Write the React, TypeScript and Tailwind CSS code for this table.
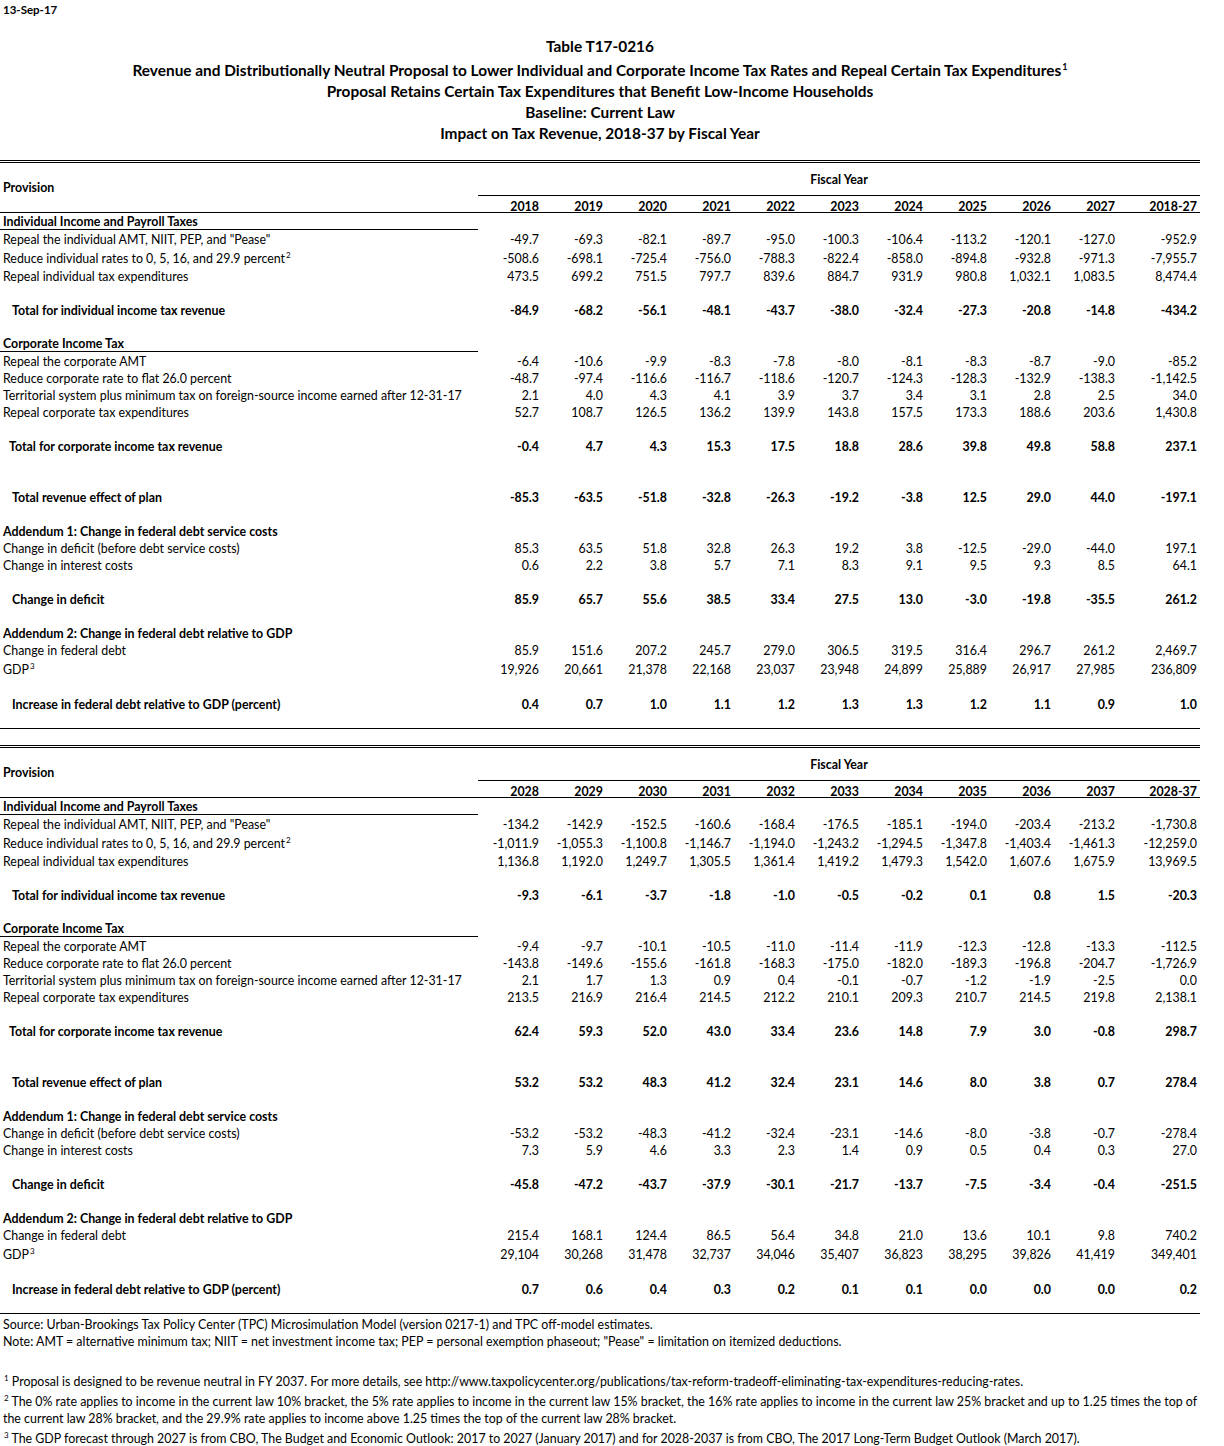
import React from 'react';

type Row =
  | { kind: 'blank'; rule?: boolean }
  | { kind: 'section'; label: string; underline?: boolean }
  | { kind: 'item'; label: string; sup?: string; values: string[] }
  | { kind: 'total'; label: string; indent: string; values: string[] };

const CORP_TERR = 'Territorial system plus minimum tax on foreign-source income earned after 12-31-17';

function buildRows(v: string[][]): Row[] {
  return [
    { kind: 'section', label: 'Individual Income and Payroll Taxes', underline: true },
    { kind: 'item', label: 'Repeal the individual AMT, NIIT, PEP, and "Pease"', values: v[0] },
    { kind: 'item', label: 'Reduce individual rates to 0, 5, 16, and 29.9 percent', sup: '2', values: v[1] },
    { kind: 'item', label: 'Repeal individual tax expenditures', values: v[2] },
    { kind: 'blank' },
    { kind: 'total', label: 'Total for individual income tax revenue', indent: 'pl-[12px]', values: v[3] },
    { kind: 'blank' },
    { kind: 'section', label: 'Corporate Income Tax', underline: true },
    { kind: 'item', label: 'Repeal the corporate AMT', values: v[4] },
    { kind: 'item', label: 'Reduce corporate rate to flat 26.0 percent', values: v[5] },
    { kind: 'item', label: CORP_TERR, values: v[6] },
    { kind: 'item', label: 'Repeal corporate tax expenditures', values: v[7] },
    { kind: 'blank' },
    { kind: 'total', label: 'Total for corporate income tax revenue', indent: 'pl-[9px]', values: v[8] },
    { kind: 'blank' },
    { kind: 'blank' },
    { kind: 'total', label: 'Total revenue effect of plan', indent: 'pl-[12px]', values: v[9] },
    { kind: 'blank' },
    { kind: 'section', label: 'Addendum 1: Change in federal debt service costs' },
    { kind: 'item', label: 'Change in deficit (before debt service costs)', values: v[10] },
    { kind: 'item', label: 'Change in interest costs', values: v[11] },
    { kind: 'blank' },
    { kind: 'total', label: 'Change in deficit', indent: 'pl-[12px]', values: v[12] },
    { kind: 'blank' },
    { kind: 'section', label: 'Addendum 2: Change in federal debt relative to GDP' },
    { kind: 'item', label: 'Change in federal debt', values: v[13] },
    { kind: 'item', label: 'GDP', sup: '3', values: v[14] },
    { kind: 'blank' },
    { kind: 'total', label: 'Increase in federal debt relative to GDP (percent)', indent: 'pl-[12px]', values: v[15] },
    { kind: 'blank', rule: true },
  ];
}

const first = {
  years: ['2018', '2019', '2020', '2021', '2022', '2023', '2024', '2025', '2026', '2027', '2018-27'],
  values: [
    ['-49.7', '-69.3', '-82.1', '-89.7', '-95.0', '-100.3', '-106.4', '-113.2', '-120.1', '-127.0', '-952.9'],
    ['-508.6', '-698.1', '-725.4', '-756.0', '-788.3', '-822.4', '-858.0', '-894.8', '-932.8', '-971.3', '-7,955.7'],
    ['473.5', '699.2', '751.5', '797.7', '839.6', '884.7', '931.9', '980.8', '1,032.1', '1,083.5', '8,474.4'],
    ['-84.9', '-68.2', '-56.1', '-48.1', '-43.7', '-38.0', '-32.4', '-27.3', '-20.8', '-14.8', '-434.2'],
    ['-6.4', '-10.6', '-9.9', '-8.3', '-7.8', '-8.0', '-8.1', '-8.3', '-8.7', '-9.0', '-85.2'],
    ['-48.7', '-97.4', '-116.6', '-116.7', '-118.6', '-120.7', '-124.3', '-128.3', '-132.9', '-138.3', '-1,142.5'],
    ['2.1', '4.0', '4.3', '4.1', '3.9', '3.7', '3.4', '3.1', '2.8', '2.5', '34.0'],
    ['52.7', '108.7', '126.5', '136.2', '139.9', '143.8', '157.5', '173.3', '188.6', '203.6', '1,430.8'],
    ['-0.4', '4.7', '4.3', '15.3', '17.5', '18.8', '28.6', '39.8', '49.8', '58.8', '237.1'],
    ['-85.3', '-63.5', '-51.8', '-32.8', '-26.3', '-19.2', '-3.8', '12.5', '29.0', '44.0', '-197.1'],
    ['85.3', '63.5', '51.8', '32.8', '26.3', '19.2', '3.8', '-12.5', '-29.0', '-44.0', '197.1'],
    ['0.6', '2.2', '3.8', '5.7', '7.1', '8.3', '9.1', '9.5', '9.3', '8.5', '64.1'],
    ['85.9', '65.7', '55.6', '38.5', '33.4', '27.5', '13.0', '-3.0', '-19.8', '-35.5', '261.2'],
    ['85.9', '151.6', '207.2', '245.7', '279.0', '306.5', '319.5', '316.4', '296.7', '261.2', '2,469.7'],
    ['19,926', '20,661', '21,378', '22,168', '23,037', '23,948', '24,899', '25,889', '26,917', '27,985', '236,809'],
    ['0.4', '0.7', '1.0', '1.1', '1.2', '1.3', '1.3', '1.2', '1.1', '0.9', '1.0'],
  ],
};

const second = {
  years: ['2028', '2029', '2030', '2031', '2032', '2033', '2034', '2035', '2036', '2037', '2028-37'],
  values: [
    ['-134.2', '-142.9', '-152.5', '-160.6', '-168.4', '-176.5', '-185.1', '-194.0', '-203.4', '-213.2', '-1,730.8'],
    ['-1,011.9', '-1,055.3', '-1,100.8', '-1,146.7', '-1,194.0', '-1,243.2', '-1,294.5', '-1,347.8', '-1,403.4', '-1,461.3', '-12,259.0'],
    ['1,136.8', '1,192.0', '1,249.7', '1,305.5', '1,361.4', '1,419.2', '1,479.3', '1,542.0', '1,607.6', '1,675.9', '13,969.5'],
    ['-9.3', '-6.1', '-3.7', '-1.8', '-1.0', '-0.5', '-0.2', '0.1', '0.8', '1.5', '-20.3'],
    ['-9.4', '-9.7', '-10.1', '-10.5', '-11.0', '-11.4', '-11.9', '-12.3', '-12.8', '-13.3', '-112.5'],
    ['-143.8', '-149.6', '-155.6', '-161.8', '-168.3', '-175.0', '-182.0', '-189.3', '-196.8', '-204.7', '-1,726.9'],
    ['2.1', '1.7', '1.3', '0.9', '0.4', '-0.1', '-0.7', '-1.2', '-1.9', '-2.5', '0.0'],
    ['213.5', '216.9', '216.4', '214.5', '212.2', '210.1', '209.3', '210.7', '214.5', '219.8', '2,138.1'],
    ['62.4', '59.3', '52.0', '43.0', '33.4', '23.6', '14.8', '7.9', '3.0', '-0.8', '298.7'],
    ['53.2', '53.2', '48.3', '41.2', '32.4', '23.1', '14.6', '8.0', '3.8', '0.7', '278.4'],
    ['-53.2', '-53.2', '-48.3', '-41.2', '-32.4', '-23.1', '-14.6', '-8.0', '-3.8', '-0.7', '-278.4'],
    ['7.3', '5.9', '4.6', '3.3', '2.3', '1.4', '0.9', '0.5', '0.4', '0.3', '27.0'],
    ['-45.8', '-47.2', '-43.7', '-37.9', '-30.1', '-21.7', '-13.7', '-7.5', '-3.4', '-0.4', '-251.5'],
    ['215.4', '168.1', '124.4', '86.5', '56.4', '34.8', '21.0', '13.6', '10.1', '9.8', '740.2'],
    ['29,104', '30,268', '31,478', '32,737', '34,046', '35,407', '36,823', '38,295', '39,826', '41,419', '349,401'],
    ['0.7', '0.6', '0.4', '0.3', '0.2', '0.1', '0.1', '0.0', '0.0', '0.0', '0.2'],
  ],
};

// raised footnote marker, kept from growing the line box
function Sup({ n }: { n: string }) {
  return <sup className="relative -top-[5px] ml-[1px] align-baseline text-[8px] leading-none">{n}</sup>;
}

function Values({ values, bold }: { values: string[]; bold?: boolean }) {
  return (
    <div className={`grid grid-cols-[repeat(10,64px)_82px] tabular-nums ${bold ? 'font-bold' : ''}`}>
      {values.map((v, i) => (
        <div key={i} className="pr-[3px] text-right">
          {v}
        </div>
      ))}
    </div>
  );
}

function FiscalTable({ years, values }: { years: string[]; values: string[][] }) {
  const rows = buildRows(values);
  return (
    <div className="w-[1200px]">
      <div className="h-[3px] border-t-[3px] border-double border-black" />
      <div className="flex h-[50px] border-b border-black">
        <div className="flex w-[478px] items-center pl-[3px] pt-[2px] font-bold">Provision</div>
        <div className="flex flex-1 flex-col">
          <div className="flex h-[33px] shrink-0 items-center justify-center border-b border-black leading-[15px] font-bold">
            Fiscal Year
          </div>
          <div className="flex h-[16px] shrink-0 items-center pt-[4px] leading-[15px] font-bold">
            <Values values={years} bold />
          </div>
        </div>
      </div>
      {rows.map((r, i) => {
        if (r.kind === 'blank') {
          return <div key={i} className={`h-[17px] ${r.rule ? 'border-b border-black' : ''}`} />;
        }
        if (r.kind === 'section') {
          return (
            <div key={i} className="flex h-[17px]">
              <div
                className={`flex w-[478px] items-center pl-[3px] pt-[3px] font-bold ${r.underline ? 'border-b border-black' : ''}`}
              >
                {r.label}
              </div>
            </div>
          );
        }
        if (r.kind === 'item') {
          return (
            <div key={i} className={`flex items-center ${r.sup ? 'h-[20px] pt-[5px]' : 'h-[17px] pt-[3px]'}`}>
              <div className="w-[478px] whitespace-nowrap pl-[3px]">
                {r.label}
                {r.sup && <Sup n={r.sup} />}
              </div>
              <Values values={r.values} />
            </div>
          );
        }
        return (
          <div key={i} className="flex h-[17px] items-center pt-[3px]">
            <div className={`w-[478px] font-bold ${r.indent}`}>{r.label}</div>
            <Values values={r.values} bold />
          </div>
        );
      })}
    </div>
  );
}

export default function App() {
  return (
    <div className="min-h-[1446px] w-[1224px] bg-white font-['Lato','Carlito',sans-serif] text-[12.4px] text-black">
      <div className="flex h-[20px] items-center pl-[3px] text-[11.5px] font-bold">13-Sep-17</div>
      <div className="h-[16px]" />
      <div className="w-[1200px] text-[15.4px] font-bold">
        <div className="flex h-[21px] items-center justify-center">Table T17-0216</div>
        <div className="mt-[3px] flex h-[21px] items-center justify-center">
          <span>
            Revenue and Distributionally Neutral Proposal to Lower Individual and Corporate Income Tax Rates and Repeal Certain Tax Expenditures
            <sup className="relative -top-[6px] ml-[1px] align-baseline text-[9px] leading-none">1</sup>
          </span>
        </div>
        <div className="flex h-[21px] items-center justify-center">
          Proposal Retains Certain Tax Expenditures that Benefit Low-Income Households
        </div>
        <div className="flex h-[21px] items-center justify-center">Baseline: Current Law</div>
        <div className="flex h-[21px] items-center justify-center">Impact on Tax Revenue, 2018-37 by Fiscal Year</div>
      </div>
      <div className="h-[16px]" />
      <FiscalTable years={first.years} values={first.values} />
      <div className="h-[16px]" />
      <FiscalTable years={second.years} values={second.values} />
      <div className="w-[1200px] pl-[3px]">
        <div className="flex h-[18px] items-center pt-[4px]">
          Source: Urban-Brookings Tax Policy Center (TPC) Microsimulation Model (version 0217-1) and TPC off-model estimates.
        </div>
        <div className="flex h-[17px] items-center pt-[3px]">
          Note: AMT = alternative minimum tax; NIIT = net investment income tax; PEP = personal exemption phaseout; "Pease" = limitation on itemized deductions.
        </div>
        <div className="h-[22px]" />
        <div className="flex h-[20px] items-center pt-[2px]">
          <span>
            <Sup n="1" /> Proposal is designed to be revenue neutral in FY 2037. For more details, see
            http://www.taxpolicycenter.org/publications/tax-reform-tradeoff-eliminating-tax-expenditures-reducing-rates.
          </span>
        </div>
        <div className="flex h-[20px] items-center whitespace-nowrap pt-[2px]">
          <span>
            <Sup n="2" /> The 0% rate applies to income in the current law 10% bracket, the 5% rate applies to income in the current law
            15% bracket, the 16% rate applies to income in the current law 25% bracket and up to 1.25 times the top of
          </span>
        </div>
        <div className="flex h-[17px] items-center">
          the current law 28% bracket, and the 29.9% rate applies to income above 1.25 times the top of the current law 28% bracket.
        </div>
        <div className="flex h-[20px] items-center pt-[2px]">
          <span>
            <Sup n="3" /> The GDP forecast through 2027 is from CBO, The Budget and Economic Outlook: 2017 to 2027 (January 2017) and for
            2028-2037 is from CBO, The 2017 Long-Term Budget Outlook (March 2017).
          </span>
        </div>
      </div>
    </div>
  );
}
